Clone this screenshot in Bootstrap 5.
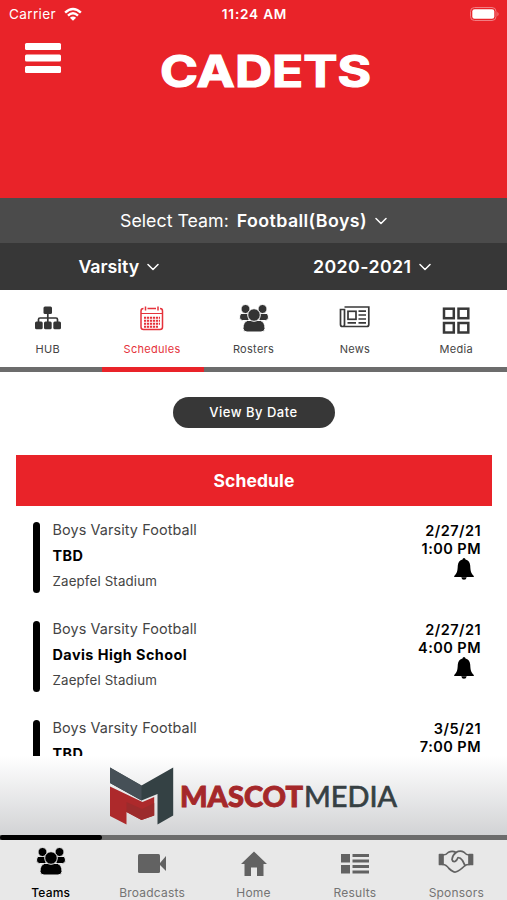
<!DOCTYPE html>
<html lang="en">
<head>
<meta charset="utf-8">
<meta name="viewport" content="width=device-width, initial-scale=1">
<title>Cadets</title>
<link href="https://cdn.jsdelivr.net/npm/bootstrap@5.3.0/dist/css/bootstrap.min.css" rel="stylesheet">
<style>
body{font-family:Inter,"Liberation Sans",sans-serif;color:#000;height:900px;font-size:14px}
svg{display:block;flex:none;overflow:visible}
.app-head{background:#e92329;height:198px}
.status{height:28px;font-size:13.6px;line-height:28px;padding:0 7px 0 9px;letter-spacing:.35px}
.status>*{flex:1 1 0}
.clock{letter-spacing:.8px}
.brand{height:60px}
.brand .burger{margin-left:25px;margin-top:15px;width:36px;border:0;padding:0;background:none}
.brand .wordmark{margin-left:96px;margin-top:16px}
.team-bar{background:#4b4b4b;height:45px;font-size:17.8px;padding-top:1px}
.filter-bar{background:#373737;height:47px;font-size:17.8px;padding-top:1px}
.filter-bar>*{flex:1 1 0}
.wide-text{letter-spacing:.4px}
.tabs-top{height:77px;font-size:11px;color:#444;letter-spacing:.3px}
.tabs-top a,.tabs-bottom a{flex:1 1 0;text-decoration:none;color:inherit}
.tabs-top svg{height:30px}
.tabs-top span{margin-top:5px;line-height:16px}
.tabs-top .hub{margin-left:-3px;margin-right:3px}
.rail{height:5px;background:#6c6c6c}
.rail div{width:102px;height:5px}
.rail .rail-top{margin-left:102px;background:#e92329}
.schedule{min-height:0;padding-top:25px}
.btn-date{background:#373737;color:#fff;width:162px;height:31px;font-size:13px;font-weight:500;letter-spacing:.5px;padding:0}
.btn-date:hover{background:#222;color:#fff}
.band{background:#e92329;height:51px;margin:27px 15px 16px 16px;font-size:17.5px;letter-spacing:.1px}
.game{height:71px;margin:0 26px 28px 33px}
.stripe{width:7px;border-radius:4px;background:#000;margin-right:12.5px}
.g-team{font-size:14.4px;line-height:16px;color:#444;letter-spacing:.1px}
.g-opp{font-size:14.4px;line-height:18px;margin-top:9px;letter-spacing:.45px}
.g-place{font-size:13.3px;line-height:16px;margin-top:8px;color:#444;letter-spacing:.15px}
.g-when{font-size:14.5px;line-height:18px;font-weight:600;letter-spacing:.45px}
.g-when svg{margin-left:auto;margin-right:7px}
.sponsor{height:79px;background:linear-gradient(#fff,#d2d3d5)}
.tabs-bottom{height:60px;background:#e8e8e8;font-size:12px;color:#747474;letter-spacing:.2px}
.tabs-bottom svg{height:32px;margin-top:6px;color:#626262}
.tabs-bottom span{line-height:16px;margin-top:7px}
.tabs-bottom .current,.tabs-bottom .current svg{color:#000}
.hot{color:#e5323b!important}
.crowd-white{stroke:#fff}
.crowd-grey{stroke:#e8e8e8}
</style>
<script src="https://cdn.jsdelivr.net/npm/bootstrap@5.3.0/dist/js/bootstrap.bundle.min.js"></script>
</head>
<body class="d-flex flex-column overflow-hidden bg-white">
<svg width="0" height="0" class="position-absolute">
  <defs>
    <symbol id="people" viewBox="0 0 30 28">
      <g fill="currentColor" stroke-width="1"><path d="M2 9.500h8v7H3.500Q.2 16.500.5 13q.2-2.500 1.500-3.500zM28 9.500h-8v7h6.500q3.300 0 3-3.500-.2-2.500-1.500-3.500z"/>
      <circle cx="6.500" cy="5" r="4.500"/><circle cx="23.500" cy="5" r="4.500"/>
      <path d="M8.500 16.500h13q4.500 1.500 4.500 8-.1 3.500-4 3.500H8q-3.900 0-4-3.500 0-6.500 4.500-8z"/>
      <circle cx="15" cy="11" r="6.300"/></g>
    </symbol>
    <symbol id="bell" viewBox="0 0 20 22"><path d="M10 0q1.400 0 1.500 1.600 4.200 1.100 4.700 5.900c.3 6 .8 7.700 3.600 10.500V19H.2v-1C3 15.200 3.500 13.500 3.800 7.500q.5-4.800 4.700-5.900Q8.600 0 10 0zM7.300 19.300h5.400q-.4 2.500-2.700 2.500t-2.700-2.500z"/></symbol>
    <symbol id="chev" viewBox="0 0 12 8"><path d="M1 1.500l5 5 5-5" fill="none" stroke="#fff" stroke-width="1.500" stroke-linecap="round" stroke-linejoin="round"/></symbol>
  </defs>
</svg>

<header class="app-head text-white flex-shrink-0">
  <div class="status d-flex">
    <div class="d-flex align-items-center gap-2"><span>Carrier</span>
      <svg class="ms-n1" width="18" height="15" viewBox="0 0 19 15" fill="none" stroke="#fff" stroke-width="2.500"><path d="M1.200 5.600Q9.500-2.400 17.800 5.600M4.200 8.700q5.300-5 10.600 0"/><path d="M9.500 14.200L6.200 10.900q3.300-2.600 6.600 0z" fill="#fff" stroke="none"/></svg>
    </div>
    <div class="clock text-center fw-semibold">11:24 AM</div>
    <div class="d-flex justify-content-end align-items-center">
      <svg width="30" height="14" viewBox="0 0 30 14"><rect x=".5" y=".5" width="25.500" height="13" rx="4" fill="none" stroke="#f27d82"/><rect x="2.300" y="2.300" width="22" height="9.400" rx="2.300" fill="#fff"/><path d="M27.500 4.700q2 2.300 0 4.600z" fill="#f49296"/></svg>
    </div>
  </div>
  <div class="brand d-flex align-items-start">
    <button class="burger" aria-label="Menu"><svg width="36" height="30" fill="#fff"><rect y="0" width="36" height="7" rx="1.500"/><rect y="11.500" width="36" height="7" rx="1.500"/><rect y="23" width="36" height="7" rx="1.500"/></svg></button>
    <svg class="wordmark" width="220" height="54"><text x="3" y="43" font-family="Inter" font-weight="700" font-size="43.500" fill="#fff" stroke="#fff" stroke-width="1.200" textLength="211" lengthAdjust="spacingAndGlyphs">CADETS</text></svg>
  </div>
</header>

<div class="team-bar d-flex align-items-center justify-content-center text-white flex-shrink-0">
  <span class="me-2">Select Team:</span><span class="wide-text fw-semibold me-2">Football(Boys)</span><svg width="12" height="8"><use href="#chev"/></svg>
</div>
<div class="filter-bar d-flex align-items-center text-white fw-semibold flex-shrink-0">
  <div class="d-flex align-items-center justify-content-center pe-3"><span class="me-2">Varsity</span><svg width="12" height="8"><use href="#chev"/></svg></div>
  <div class="d-flex align-items-center justify-content-center pe-3"><span class="wide-text me-2">2020-2021</span><svg width="12" height="8"><use href="#chev"/></svg></div>
</div>

<nav class="tabs-top d-flex text-center flex-shrink-0 pt-3">
  <a href="#" class="hub d-flex flex-column align-items-center"><svg width="28" viewBox="0 0 28 30" fill="#353535"><rect x="9.500" y=".5" width="8.500" height="7.500" rx="1.500"/><rect x="1" y="15.500" width="7.700" height="7.700" rx="1.500"/><rect x="10" y="15.500" width="7.700" height="7.700" rx="1.500"/><rect x="19.300" y="15.500" width="7.700" height="7.700" rx="1.500"/><path d="M13.800 8v8M4.500 16v-2.500q0-1.500 1.500-1.500h16q1.500 0 1.500 1.500V16" fill="none" stroke="#353535" stroke-width="1.700"/></svg><span>HUB</span></a>
  <a href="#" class="hot d-flex flex-column align-items-center"><svg width="26" viewBox="0 0 26 30" fill="none" stroke="#e5323b"><rect x="2" y="2.500" width="21.500" height="21" rx="2.500" stroke-width="1.500"/><path d="M2 7.500h21.500" stroke-width="1"/><path d="M6.500 0v5M19 0v5" stroke="#fff" stroke-width="4"/><path d="M6.500 .5v4M19 .5v4" stroke-width="1.500"/><path d="M5 11.700h16M5 14.700h16M5 17.700h16M5 20.700h14" stroke-width="2" stroke-dasharray="2.200 .8"/></svg><span>Schedules</span></a>
  <a href="#" class="d-flex flex-column align-items-center"><svg class="crowd-white" width="30" color="#333" viewBox="0 0 30 30"><use href="#people" y="-2" width="30" height="28"/></svg><span>Rosters</span></a>
  <a href="#" class="d-flex flex-column align-items-center"><svg width="32" viewBox="0 0 32 30" fill="none" stroke="#383838" stroke-width="1.700"><path d="M5.500 1h24.300v17.500q0 2-2 2H3.500q-2 0-2-2V3.500h4v15q0 2-1.500 2"/><rect x="9" y="5.300" width="8" height="8"/><path d="M19.500 5.200h7.500M19.500 9h7.500M19.500 13h7.500M8.500 16.800h8.500M19.500 16.800h7.500"/></svg><span>News</span></a>
  <a href="#" class="d-flex flex-column align-items-center"><svg width="28" viewBox="0 0 28 30" fill="none" stroke="#383838" stroke-width="2.500"><rect x="2" y="2.700" width="9.800" height="9.500"/><rect x="16.500" y="2.700" width="9.800" height="9.500"/><rect x="2" y="17" width="9.800" height="9.500"/><rect x="16.500" y="17" width="9.800" height="9.500"/></svg><span>Media</span></a>
</nav>
<div class="rail flex-shrink-0"><div class="rail-top"></div></div>

<main class="schedule flex-grow-1 overflow-hidden">
  <div class="d-flex justify-content-center"><button class="btn btn-date rounded-pill">View By Date</button></div>
  <h1 class="band d-flex align-items-center justify-content-center text-white fw-bold">Schedule</h1>
  <article class="game d-flex">
    <div class="stripe"></div>
    <div class="flex-grow-1"><div class="g-team">Boys Varsity Football</div><div class="g-opp fw-bold">TBD</div><div class="g-place">Zaepfel Stadium</div></div>
    <div class="g-when text-end"><div>2/27/21</div><div>1:00 PM</div><svg width="20" height="22"><use href="#bell"/></svg></div>
  </article>
  <article class="game d-flex">
    <div class="stripe"></div>
    <div class="flex-grow-1"><div class="g-team">Boys Varsity Football</div><div class="g-opp fw-bold">Davis High School</div><div class="g-place">Zaepfel Stadium</div></div>
    <div class="g-when text-end"><div>2/27/21</div><div>4:00 PM</div><svg width="20" height="22"><use href="#bell"/></svg></div>
  </article>
  <article class="game d-flex">
    <div class="stripe"></div>
    <div class="flex-grow-1"><div class="g-team">Boys Varsity Football</div><div class="g-opp fw-bold">TBD</div><div class="g-place">Zaepfel Stadium</div></div>
    <div class="g-when text-end"><div>3/5/21</div><div>7:00 PM</div><svg width="20" height="22"><use href="#bell"/></svg></div>
  </article>
</main>

<aside class="sponsor d-flex justify-content-center flex-shrink-0">
  <svg width="290" height="79" viewBox="109 756 290 79" role="img">
    <path d="M110 767.500l31.500 18 31.700-18v48l-15.700 9V794l-16 6.500L110 783z" fill="#344144"/>
    <path d="M110 767.500l31.500 18v15L110 783z" fill="#465057"/>
    <path d="M110 786.500l32.500 15.500 11.700-5v18.500l-12.700 4.500-15-8v12.500l-16.500-8.500z" fill="#ad292b"/>
    <path d="M126.500 802l15.500 7 12.200-6v12.500l-12.700 4.500-15-8z" fill="#9c2b2c"/>
    <text x="180" y="806.500" font-family="Lato" font-weight="900" font-size="28" fill="#a5282a" stroke="#a5282a" stroke-width=".9" textLength="123" lengthAdjust="spacingAndGlyphs">MASCOT</text>
    <text x="304" y="806.500" font-family="Lato" font-weight="400" font-size="28" fill="#364043" stroke="#364043" stroke-width=".7" textLength="93" lengthAdjust="spacingAndGlyphs">MEDIA</text>
  </svg>
</aside>
<div class="rail flex-shrink-0"><div class="bg-black rounded-pill"></div></div>
<nav class="tabs-bottom d-flex text-center flex-shrink-0">
  <a href="#" class="current d-flex flex-column align-items-center"><svg class="crowd-grey" width="30" viewBox="0 0 30 32"><use href="#people" y="1" width="30" height="28"/></svg><span class="fw-medium">Teams</span></a>
  <a href="#" class="d-flex flex-column align-items-center"><svg width="30" viewBox="0 0 30 32" fill="currentColor"><rect x="1" y="8" width="22" height="19" rx="1.500"/><path d="M23 17l6-7v15l-6-6z"/></svg><span>Broadcasts</span></a>
  <a href="#" class="d-flex flex-column align-items-center"><svg width="28" viewBox="0 0 28 32" fill="currentColor"><path d="M14 5.500L27 18h-3.500v12H17v-8.500h-6V30H4.500V18H1z"/></svg><span>Home</span></a>
  <a href="#" class="d-flex flex-column align-items-center"><svg width="28" viewBox="0 0 28 32" fill="currentColor"><rect y="8" width="9" height="8.500"/><rect y="19" width="9" height="8.500"/><path d="M11.500 8H28v3H11.500zM11.500 13.500H28v3H11.500zM11.500 19H28v3H11.500zM11.500 24.500H28v3H11.500z"/></svg><span>Results</span></a>
  <a href="#" class="d-flex flex-column align-items-center"><svg width="36" viewBox="0 0 36 32" fill="none" stroke="currentColor" stroke-width="1.700" stroke-linejoin="round" stroke-linecap="round"><path d="M1.500 8.500H5v10H1.500zM31 8.500h3.500v10H31z" fill="currentColor"/><path d="M5 9q3 0 5.500-2.800 4-2 7.500.3 4-2.500 8-.3 2.500 2.800 5 2.800M5 18.500q3 0 6 4 4.500 4 6.500 3.500 4-1 9.500-6.500 1.500-1 4-1"/><path d="M18 6.500q-3.500 2.500-4 7 .5 2.500 3 2 2-1 3-4 2.500 0 4.500 3l2.500 5"/></svg><span>Sponsors</span></a>
</nav>
</body>
</html>
